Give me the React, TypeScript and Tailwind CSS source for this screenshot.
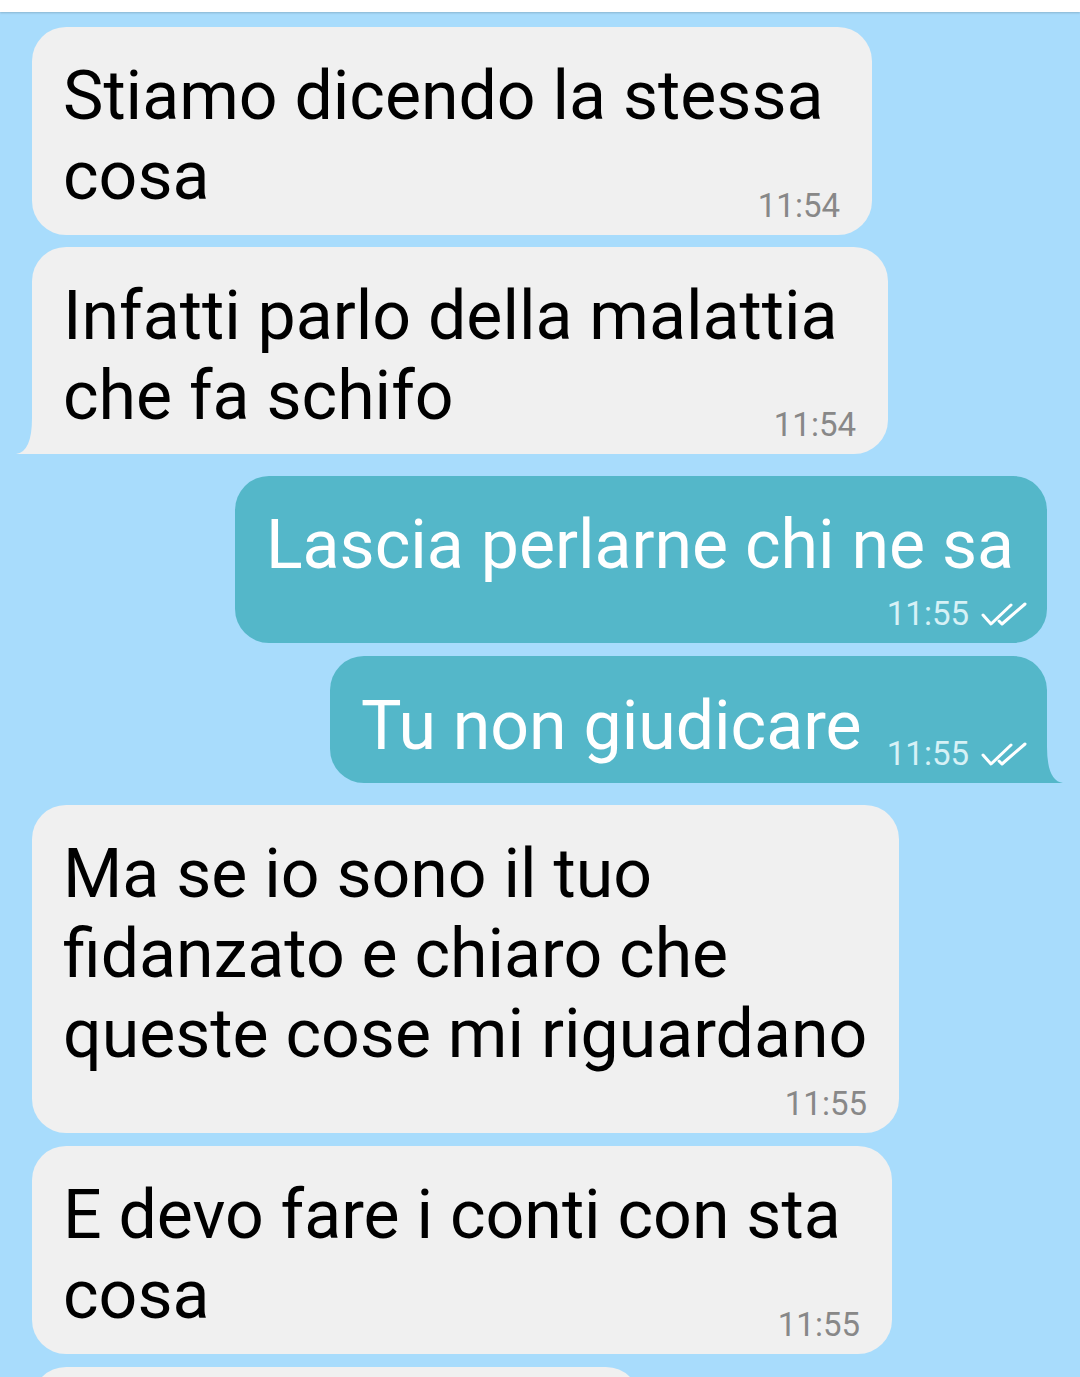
import React from "react";

const font = { fontFamily: "Roboto, 'Noto Sans', sans-serif" };

const Ticks = () => (
  <svg width="48" height="24" viewBox="0 0 48 24" fill="none" stroke="#ffffff" strokeWidth="3" strokeLinecap="round" strokeLinejoin="round">
    <path d="M3 13 L11 22 L31 3" />
    <path d="M19 19 L22 22 L45 2" />
  </svg>
);

const TailLeft = ({ color }: { color: string }) => (
  <svg className="absolute bottom-0 left-[-16px]" width="18" height="36" viewBox="0 0 18 36">
    <path d="M16 0 Q16 34 0 36 L18 36 L18 0 Z" fill={color} />
  </svg>
);

const TailRight = ({ color }: { color: string }) => (
  <svg className="absolute bottom-0 right-[-16px]" width="18" height="36" viewBox="0 0 18 36">
    <path d="M2 0 Q2 34 18 36 L0 36 L0 0 Z" fill={color} />
  </svg>
);

interface InProps {
  lines: string[];
  time: string;
  className: string;
  tsClass: string;
  tail?: boolean;
}

const Incoming = ({ lines, time, className, tsClass, tail }: InProps) => (
  <div className={"relative ml-[32px] rounded-[34px] bg-[#f0f0f0] pl-[31px] pr-[32px] pt-[29px] pb-[11px] " + className}>
    <div className="text-[68px] leading-[80px] text-black whitespace-nowrap">
      {lines.map((l) => (
        <div key={l}>{l}</div>
      ))}
    </div>
    <div className={"text-right text-[33px] leading-[36px] text-[#888888] " + tsClass}>{time}</div>
    {tail && <TailLeft color="#f0f0f0" />}
  </div>
);

export default function App() {
  return (
    <div style={font} className="w-[1080px] h-[1377px] overflow-hidden bg-[#a8dcfc] flex flex-col">
      <div className="h-[12px] shrink-0 bg-white shadow-[0_1px_2px_rgba(0,0,0,0.18)]" />

      <Incoming
        className="mt-[15px] w-[840px]"
        lines={["Stiamo dicendo la stessa", "cosa"]}
        time="11:54"
        tsClass="-mt-[28px]"
      />
      <Incoming
        className="mt-[12px] w-[856px] rounded-bl-none"
        lines={["Infatti parlo della malattia", "che fa schifo"]}
        time="11:54"
        tsClass="-mt-[29px]"
        tail
      />

      <div className="relative mt-[22px] self-end mr-[33px] w-[812px] rounded-[34px] bg-[#54b7c9] pl-[31px] pr-[19px] pt-[29px] pb-[11px]">
        <div className="text-[68px] leading-[80px] text-white whitespace-nowrap">Lascia perlarne chi ne sa</div>
        <div className="mt-[11px] flex items-center justify-end gap-[11px] text-[33px] leading-[36px] text-[#d6f1f6]">
          <span>11:55</span>
          <Ticks />
        </div>
      </div>

      <div className="relative mt-[13px] self-end mr-[33px] w-[717px] rounded-[34px] rounded-br-none bg-[#54b7c9] pl-[31px] pr-[19px] pt-[30px] pb-[17px] flex items-end">
        <div className="text-[68px] leading-[80px] text-white whitespace-nowrap">Tu non giudicare</div>
        <div className="ml-auto -mb-[6px] flex items-center gap-[11px] text-[33px] leading-[36px] text-[#d6f1f6]">
          <span>11:55</span>
          <Ticks />
        </div>
        <TailRight color="#54b7c9" />
      </div>

      <Incoming
        className="mt-[22px] w-[867px]"
        lines={["Ma se io sono il tuo", "fidanzato e chiaro che", "queste cose mi riguardano"]}
        time="11:55"
        tsClass="mt-[12px]"
      />
      <Incoming
        className="mt-[13px] w-[860px]"
        lines={["E devo fare i conti con sta", "cosa"]}
        time="11:55"
        tsClass="-mt-[28px]"
      />

      <div className="mt-[13px] ml-[32px] w-[608px] h-[60px] shrink-0 rounded-t-[34px] bg-[#f0f0f0]" />
    </div>
  );
}
